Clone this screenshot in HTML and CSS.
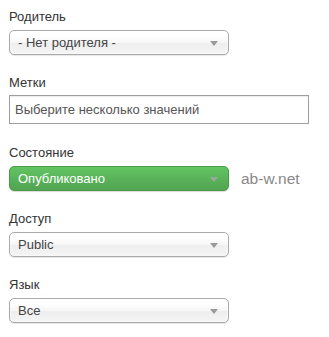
FILE: index.html
```html
<!DOCTYPE html>
<html lang="ru">
<head>
<meta charset="utf-8">
<title>Form</title>
<link rel="stylesheet" href="styles.css">
</head>
<body>
<div class="form">
  <div class="group">
    <div class="label">Родитель</div>
    <div class="select"><span class="value">- Нет родителя -</span><span class="arrow"></span></div>
  </div>
  <div class="group">
    <div class="label">Метки</div>
    <div class="input">Выберите несколько значений</div>
  </div>
  <div class="group">
    <div class="label">Состояние</div>
    <div class="row">
      <div class="select select-success"><span class="value">Опубликовано</span><span class="arrow"></span></div>
      <span class="mark">ab-w.net</span>
    </div>
  </div>
  <div class="group">
    <div class="label">Доступ</div>
    <div class="select"><span class="value">Public</span><span class="arrow"></span></div>
  </div>
  <div class="group">
    <div class="label">Язык</div>
    <div class="select"><span class="value">Все</span><span class="arrow"></span></div>
  </div>
</div>
</body>
</html>
```

FILE: styles.css
```css
html, body {
  margin: 0;
  padding: 0;
  background: #fff;
}
body {
  font-family: "Liberation Sans", Arial, sans-serif;
  font-size: 13px;
  color: #333;
}
.form {
  padding: 8px 0 0 9px;
  display: flex;
  flex-direction: column;
}
.group {
  margin-bottom: 19px;
}
.label {
  line-height: 18px;
  height: 18px;
  margin-bottom: 4px;
  color: #333;
}
.select {
  box-sizing: border-box;
  width: 220px;
  height: 25px;
  border: 1px solid #aaa;
  border-radius: 5px;
  background: linear-gradient(#ffffff 20%, #f6f6f6 50%, #eeeeee 52%, #f4f4f4 100%);
  box-shadow: inset 0 0 3px #fff, 0 1px 1px rgba(0, 0, 0, 0.1);
  display: flex;
  align-items: center;
  justify-content: space-between;
  padding: 0 10px 0 8px;
  color: #444;
}
.value {
  line-height: 23px;
}
.arrow {
  width: 0;
  height: 0;
  border-left: 4px solid transparent;
  border-right: 4px solid transparent;
  border-top: 5px solid #9a9a9a;
  margin-top: 1px;
}
.select-success {
  background: linear-gradient(#62c462, #51a351);
  border-color: #4a9a4a;
  color: #fff;
  box-shadow: 0 1px 1px rgba(0, 0, 0, 0.15);
}
.select-success .arrow {
  border-top-color: #9aa89a;
}
.row {
  display: flex;
  align-items: center;
  gap: 12px;
}
.mark {
  font-size: 15.5px;
  color: #888;
  margin-top: 1px;
}
.input {
  box-sizing: border-box;
  width: 300px;
  height: 29px;
  margin: -1px 0 1px;
  border: 1px solid #9e9e9e;
  background: #fff;
  box-shadow: inset 0 1px 1px rgba(0, 0, 0, 0.08);
  padding: 0 5px;
  line-height: 27px;
  color: #555;
}
```
